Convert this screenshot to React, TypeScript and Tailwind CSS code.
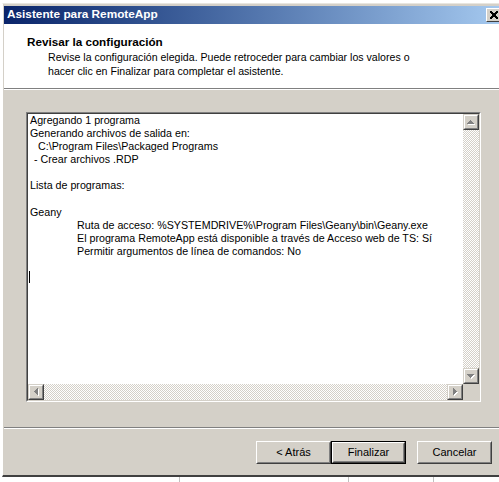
type Dir = "up" | "down" | "left" | "right";

const arrows: Record<Dir, number[][]> = {
  up: [[5, 4, 1, 1], [4, 5, 3, 1], [3, 6, 5, 1], [2, 7, 7, 1]],
  down: [[2, 4, 7, 1], [3, 5, 5, 1], [4, 6, 3, 1], [5, 7, 1, 1]],
  left: [[4, 5, 1, 1], [5, 4, 1, 3], [6, 3, 1, 5], [7, 2, 1, 7]],
  right: [[4, 2, 1, 7], [5, 3, 1, 5], [6, 4, 1, 3], [7, 5, 1, 1]],
};

function ScrollButton({ dir }: { dir: Dir }) {
  return (
    <div className="h-[16px] w-[16px] shrink-0 border border-t-[#d4d0c8] border-l-[#d4d0c8] border-r-[#404040] border-b-[#404040]">
      <div className="h-full w-full border border-t-white border-l-white border-r-[#808080] border-b-[#808080] bg-[#d4d0c8]">
        <svg width="12" height="12" viewBox="0 0 12 12" shapeRendering="crispEdges">
          {arrows[dir].map(([x, y, w, h], i) => (
            <rect key={"s" + i} x={x + 1} y={y + 1} width={w} height={h} fill="#ffffff" />
          ))}
          {arrows[dir].map(([x, y, w, h], i) => (
            <rect key={"a" + i} x={x} y={y} width={w} height={h} fill="#808080" />
          ))}
        </svg>
      </div>
    </div>
  );
}

function Button({ label, primary }: { label: string; primary?: boolean }) {
  return (
    <div className={`h-[23px] w-[75px] ${primary ? "border border-black" : ""}`}>
      <div className="h-full w-full border border-t-white border-l-white border-r-[#404040] border-b-[#404040]">
        <div className="flex h-full w-full items-center justify-center border border-t-[#d4d0c8] border-l-[#d4d0c8] border-r-[#808080] border-b-[#808080] bg-[#d4d0c8] text-[11px] text-black">
          {label}
        </div>
      </div>
    </div>
  );
}

const checker =
  "bg-[repeating-conic-gradient(#ffffff_0%_25%,#d4d0c8_0%_50%)] bg-size-[2px_2px]";

export default function App() {
  return (
    <div className="relative h-[482px] w-[499px] overflow-hidden bg-white font-['Liberation_Sans',Arial,sans-serif]">
      <div className="ml-[2px] mt-[3px] flex h-[474px] w-[502px] flex-col border-l border-t border-b-2 border-l-white border-t-[#e8e6e0] border-b-[#404040] bg-[#d4d0c8] pl-[1px] pt-[2px]">
        {/* title bar */}
        <div className="flex h-[18px] shrink-0 items-center justify-between bg-linear-to-r from-[#0a246a] to-[#a6caf0] pl-[3px] pr-[2px]">
          <span className="text-[11.8px] font-bold leading-none text-white">Asistente para RemoteApp</span>
          <div className="h-[14px] w-[16px] border border-t-white border-l-white border-r-[#404040] border-b-[#404040] bg-[#d4d0c8]">
            <svg width="14" height="12" viewBox="0 0 14 12" shapeRendering="crispEdges">
              <path d="M3 2.5 L10 9.5 M4 2.5 L11 9.5 M10 2.5 L3 9.5 M11 2.5 L4 9.5" stroke="#000" strokeWidth="1" />
            </svg>
          </div>
        </div>

        {/* header */}
        <div className="h-[64px] shrink-0 bg-white pl-[23px] pt-[11px]">
          <div className="text-[11.7px] font-bold leading-[14px] text-black">Revisar la configuración</div>
          <div className="mt-[1px] pl-[21px] text-[10.6px] leading-[14px] text-black">
            Revise la configuración elegida. Puede retroceder para cambiar los valores o
            <br />
            hacer clic en Finalizar para completar el asistente.
          </div>
        </div>
        <div className="h-[1px] shrink-0 bg-[#808080]" />
        <div className="h-[1px] shrink-0 bg-white" />

        {/* body */}
        <div className="flex flex-1 flex-col">
          <div className="ml-[22px] mt-[22px] h-[290px] w-[455px] border border-t-[#808080] border-l-[#808080] border-r-white border-b-white">
            <div className="flex h-full w-full flex-col border border-t-[#404040] border-l-[#404040] border-r-[#d4d0c8] border-b-[#d4d0c8] bg-white">
              <div className="flex min-h-0 flex-1">
                <div className="relative flex-1 pl-[2px] text-[10.7px] leading-[13px] text-black">
                  <div>Agregando 1 programa</div>
                  <div>Generando archivos de salida en:</div>
                  <div className="pl-[8px]">C:\Program Files\Packaged Programs</div>
                  <div className="pl-[4px]">- Crear archivos .RDP</div>
                  <div className="h-[13px]" />
                  <div>Lista de programas:</div>
                  <div className="h-[13px]" />
                  <div className="mt-[1px]">Geany</div>
                  <div className="pl-[47px]">Ruta de acceso: %SYSTEMDRIVE%\Program Files\Geany\bin\Geany.exe</div>
                  <div className="pl-[47px]">El programa RemoteApp está disponible a través de Acceso web de TS: Sí</div>
                  <div className="pl-[47px]">Permitir argumentos de línea de comandos: No</div>
                  <div className="h-[13px]" />
                  <div className="ml-[-1px] h-[12px] w-[1px] bg-black" />
                </div>
                <div className="flex w-[16px] flex-col">
                  <ScrollButton dir="up" />
                  <div className={`flex-1 ${checker}`} />
                  <ScrollButton dir="down" />
                </div>
              </div>
              <div className="flex h-[16px] shrink-0">
                <ScrollButton dir="left" />
                <div className={`flex-1 ${checker}`} />
                <ScrollButton dir="right" />
                <div className="w-[16px] bg-[#d4d0c8]" />
              </div>
            </div>
          </div>

          <div className="mt-[25px] h-[1px] bg-[#808080]" />
          <div className="h-[1px] bg-white" />

          <div className="ml-[252px] mt-[12px] flex">
            <Button label="< Atrás" />
            <Button label="Finalizar" primary />
            <div className="w-[11px]" />
            <Button label="Cancelar" />
          </div>
        </div>
      </div>
      <div className="absolute bottom-0 left-[179px] h-[5px] w-[1px] bg-[#c0c0c0]" />
      <div className="absolute bottom-0 left-[348px] h-[5px] w-[1px] bg-[#c0c0c0]" />
      <div className="absolute bottom-0 left-[433px] h-[5px] w-[1px] bg-[#c0c0c0]" />
    </div>
  );
}
